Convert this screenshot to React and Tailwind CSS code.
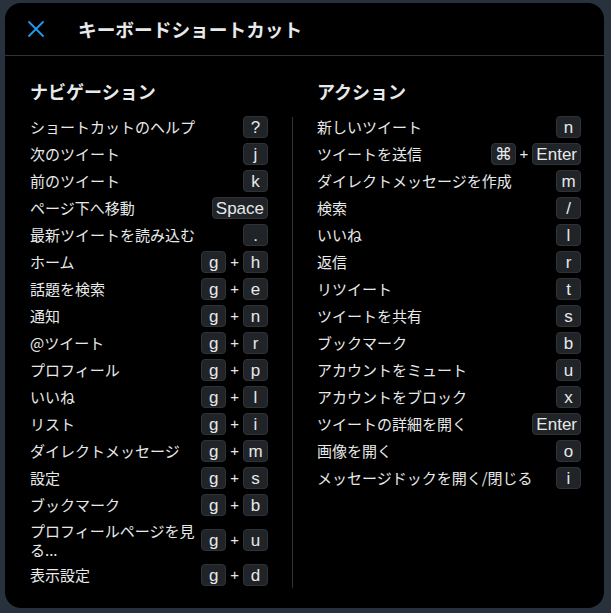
import React from "react";

const navItems = [
  { label: "ショートカットのヘルプ", keys: ["?"] },
  { label: "次のツイート", keys: ["j"] },
  { label: "前のツイート", keys: ["k"] },
  { label: "ページ下へ移動", keys: ["Space"] },
  { label: "最新ツイートを読み込む", keys: ["."] },
  { label: "ホーム", keys: ["g", "h"] },
  { label: "話題を検索", keys: ["g", "e"] },
  { label: "通知", keys: ["g", "n"] },
  { label: "@ツイート", keys: ["g", "r"] },
  { label: "プロフィール", keys: ["g", "p"] },
  { label: "いいね", keys: ["g", "l"] },
  { label: "リスト", keys: ["g", "i"] },
  { label: "ダイレクトメッセージ", keys: ["g", "m"] },
  { label: "設定", keys: ["g", "s"] },
  { label: "ブックマーク", keys: ["g", "b"] },
  { label: "プロフィールページを見る...", keys: ["g", "u"] },
  { label: "表示設定", keys: ["g", "d"] },
];

const actionItems = [
  { label: "新しいツイート", keys: ["n"] },
  { label: "ツイートを送信", keys: ["⌘", "Enter"] },
  { label: "ダイレクトメッセージを作成", keys: ["m"] },
  { label: "検索", keys: ["/"] },
  { label: "いいね", keys: ["l"] },
  { label: "返信", keys: ["r"] },
  { label: "リツイート", keys: ["t"] },
  { label: "ツイートを共有", keys: ["s"] },
  { label: "ブックマーク", keys: ["b"] },
  { label: "アカウントをミュート", keys: ["u"] },
  { label: "アカウントをブロック", keys: ["x"] },
  { label: "ツイートの詳細を開く", keys: ["Enter"] },
  { label: "画像を開く", keys: ["o"] },
  { label: "メッセージドックを開く/閉じる", keys: ["i"] },
];

const Key = ({ children }) => (
  <span className="flex h-[22px] min-w-[25px] items-center justify-center rounded-[4px] border border-[#2f3336] bg-[#202327] px-[3px] pt-[2px] font-['Liberation_Sans',sans-serif] text-[17px] leading-none text-[#e7e9ea]">
    {children}
  </span>
);

const Row = ({ item }) => (
  <div className="flex items-center justify-between gap-1 py-[2.5px]">
    <span className="text-[15px] leading-[19px] text-[#e7e9ea]">{item.label}</span>
    <div className="flex h-[22px] shrink-0 items-center">
      {item.keys.map((k, i) => (
        <React.Fragment key={i}>
          {i > 0 && (
            <span className="mx-[4px] font-['Liberation_Sans',sans-serif] text-[15px] leading-none text-[#e7e9ea]">+</span>
          )}
          <Key>{k}</Key>
        </React.Fragment>
      ))}
    </div>
  </div>
);

const Section = ({ title, items, className }) => (
  <div className={className}>
    <h2 className="mb-[10px] text-[18px] font-bold leading-[24px] text-[#e7e9ea]">{title}</h2>
    {items.map((item, i) => (
      <Row key={i} item={item} />
    ))}
  </div>
);

export default function App() {
  return (
    <div className="h-[613px] w-[611px] overflow-hidden bg-[#28323d] pl-[5px] pt-[3px] font-['Noto_Sans_CJK_JP',sans-serif]">
      <div className="h-[605px] w-[599px] rounded-2xl bg-black">
        <header className="flex h-[53px] items-center border-b border-[#2f3336] pl-[23px]">
          <svg width="16" height="16" viewBox="0 0 16 16" className="text-[#1d9bf0]">
            <path d="M1 1 L15 15 M15 1 L1 15" stroke="currentColor" strokeWidth="1.8" strokeLinecap="round" />
          </svg>
          <h1 className="ml-[34px] text-[18.7px] font-bold leading-[24px] text-[#e7e9ea]">キーボードショートカット</h1>
        </header>
        <div className="flex pl-[25px] pt-[23px]">
          <Section title="ナビゲーション" items={navItems} className="w-[238px]" />
          <div className="mx-[24px] mt-[38px] w-px bg-[#2f3336]" />
          <Section title="アクション" items={actionItems} className="w-[264px] self-start" />
        </div>
      </div>
    </div>
  );
}
